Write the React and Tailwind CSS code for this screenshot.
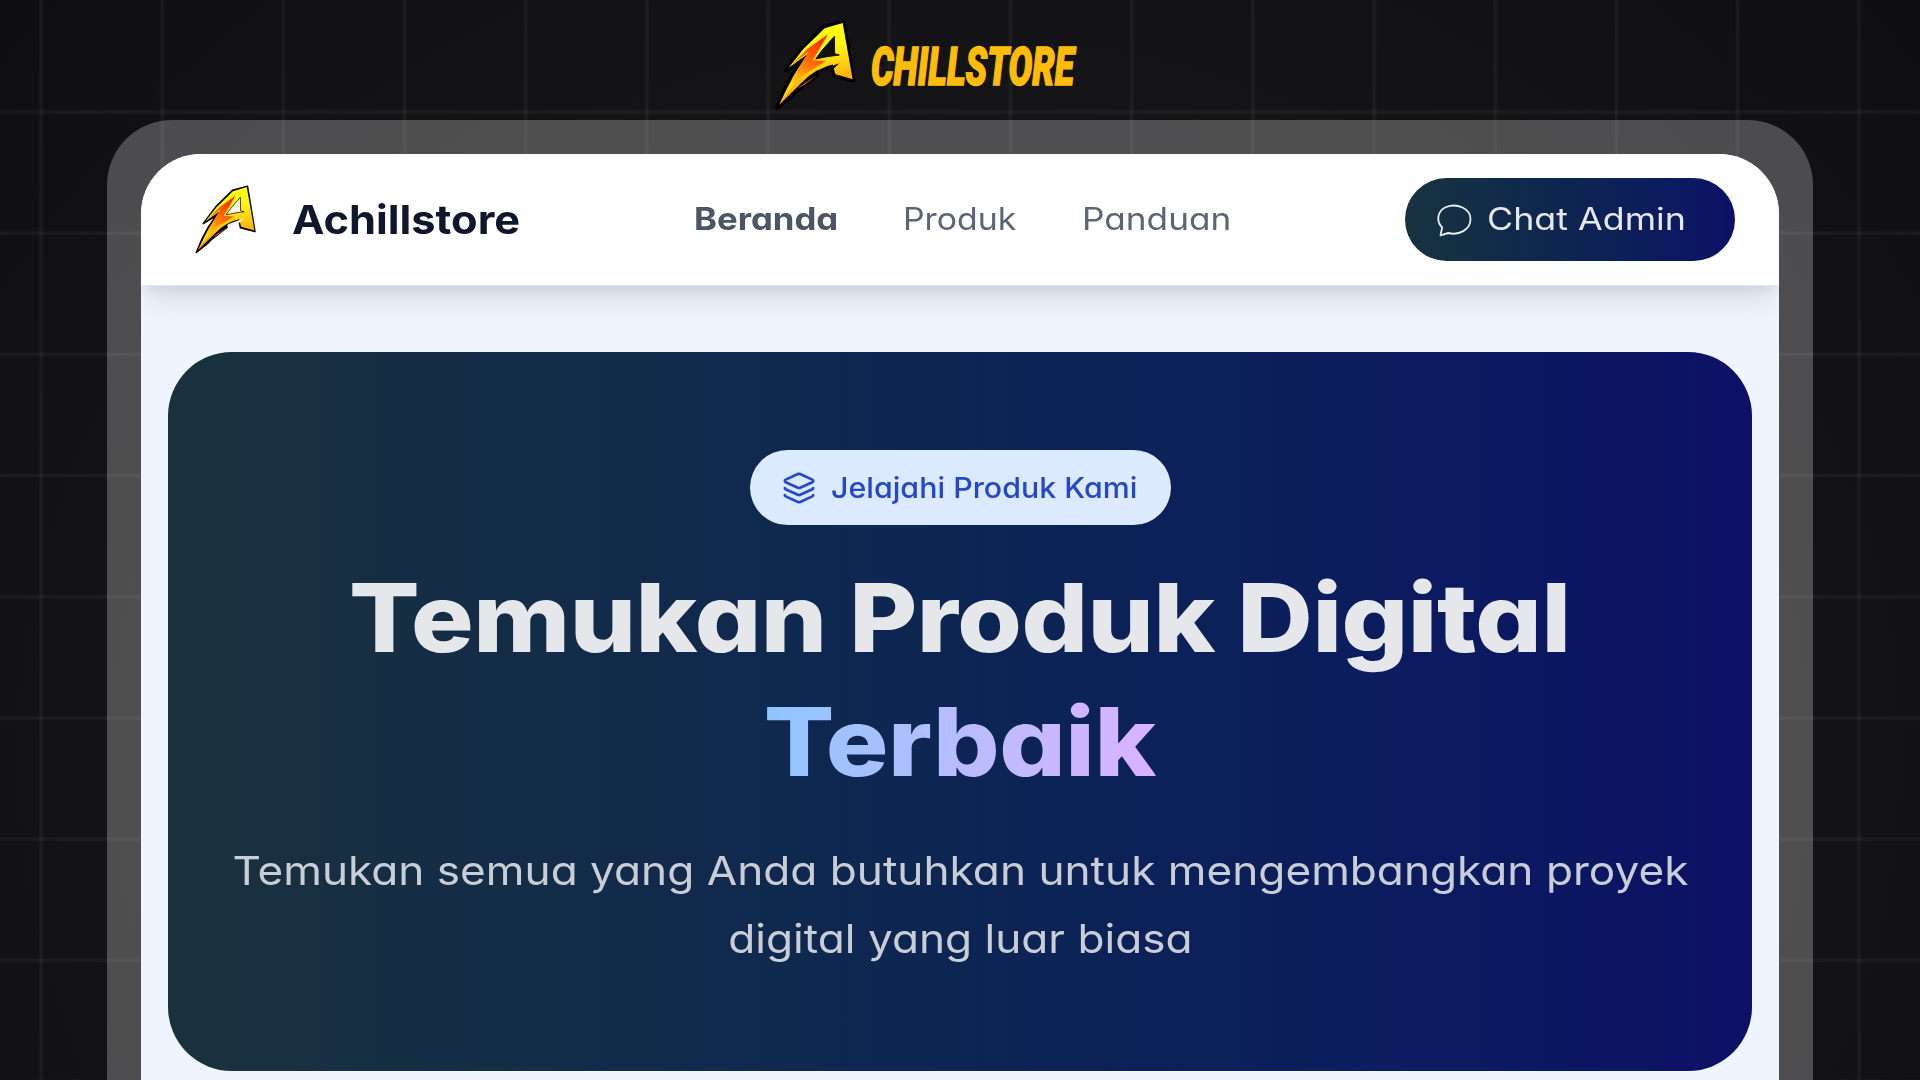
import { Layers } from 'lucide-react';

const menu = [
  { label: 'Beranda', style: 'w-[209px]', text: 'font-bold text-gray-600 scale-x-[1.12]' },
  { label: 'Produk', style: 'w-[179px]', text: 'text-[#5b6675] scale-x-[1.09]' },
  { label: 'Panduan', style: 'w-[150px]', text: 'text-[#5b6675] scale-x-[1.135]' },
];

function Logo({ id, className, outline, hole }) {
  return (
    <svg viewBox="18 24 246 276" className={className} preserveAspectRatio="none">
      <defs>
        <linearGradient id={`${id}-body`} x1="0.6" y1="0" x2="0.8" y2="1">
          <stop offset="0.3" stopColor="#fff714" />
          <stop offset="0.75" stopColor="#ffa60a" />
        </linearGradient>
        <linearGradient id={`${id}-bolt`} x1="180" y1="70" x2="50" y2="260" gradientUnits="userSpaceOnUse">
          <stop offset="0.1" stopColor="#ff2a00" />
          <stop offset="0.5" stopColor="#ff7a08" />
          <stop offset="0.85" stopColor="#ffe80c" />
        </linearGradient>
      </defs>
      <path
        d="M227 33 L168 48 L102 114 L54 178 L104 148 L74 192 L50 236 L27 290 L70 256 L88 238 L148 192 L142 184 L194 164 L199 194 L256 209 Z"
        fill="#000"
        stroke="#000"
        strokeWidth={outline}
        strokeLinejoin="round"
      />
      <path
        d="M224 36 L170 52 L106 114 L62 170 L118 130 L78 192 L54 238 L33 282 L72 244 L100 216 Q140 172 207 157 L194 160 L202 190 L254 205 Z"
        fill={`url(#${id}-body)`}
      />
      <path d="M70 162 L122 122 L80 192 L40 270 Q72 222 112 188 L174 150 L134 148 L180 70 L118 114 Z" fill={`url(#${id}-bolt)`} />
      <path d="M199 76 L162 118 L143 144 Q176 136 214 132 L200 128 Z" fill={hole} stroke="#111" strokeWidth="3" />
      <path d="M150 180 L214 157 L196 174 L150 190 Z" fill={hole} />
      <path d="M84 234 L148 192 L112 220 Z" fill="#f4600b" />
    </svg>
  );
}

function ChatIcon() {
  return (
    <svg viewBox="170 280 110 102" className="h-[34px] w-[37px]" fill="none" stroke="#e8edf3" strokeWidth="5.5" strokeLinejoin="round">
      <path d="M183 377 L188 353 C170 336 172 304 200 292 C233 279 273 297 273 328 C273 361 238 378 206 370 Z" />
    </svg>
  );
}

export default function App() {
  return (
    <div className="h-[1080px] w-full overflow-hidden bg-[radial-gradient(ellipse_75%_120%_at_50%_70%,#1c1c1e,#0d0d0f)] font-['Inter',sans-serif] [font-feature-settings:'cv11']">
      <div className="flex h-full flex-col items-center bg-[linear-gradient(to_right,transparent,rgba(255,255,255,0.045)_1.5px,rgba(255,255,255,0.045)_3.5px,transparent_5px),linear-gradient(to_bottom,transparent,rgba(255,255,255,0.045)_1.5px,rgba(255,255,255,0.045)_3.5px,transparent_5px)] bg-[length:121.2px_121.2px] bg-[position:38.5px_109.5px]">

        {/* Brand */}
        <div className="flex h-[120px] w-full shrink-0 pt-[19px] pl-[774px]">
          <Logo id="brand" className="h-[92px] w-[82px] overflow-visible" outline="12" hole="#111" />
          <svg className="ml-[15px] h-[92px] w-[212px] overflow-visible">
            <text
              x="0"
              y="65.5"
              textLength="203"
              lengthAdjust="spacingAndGlyphs"
              className="fill-[#ffbc08] stroke-[#ffbc08] stroke-[1.5px] font-['Roboto',sans-serif] text-[53px] font-black italic"
            >
              CHILLSTORE
            </text>
          </svg>
        </div>

        {/* Frame */}
        <div className="w-[1706px] flex-1 rounded-t-[65px] bg-white/25 px-[34px] pt-[34px]">
          <div className="h-full overflow-hidden rounded-t-[60px] bg-[#eef5ff]">

            {/* Navbar */}
            <header className="flex h-[132px] items-center border-b border-[#e2e8ee] bg-white pl-[53px] shadow-[0_17px_28px_-5px_rgba(0,0,0,0.11),0_7px_14px_-5px_rgba(0,0,0,0.08)]">
              <Logo id="nav" className="h-[71px] w-[63px] overflow-visible" outline="6" hole="#f4f4ec" />
              <div className="ml-[35px] w-[402px] text-[40px] font-bold text-slate-900">
                <span className="inline-block origin-left scale-x-[1.085]">Achillstore</span>
              </div>
              <nav className="flex text-[31px]">
                {menu.map((m) => (
                  <a key={m.label} className={m.style}>
                    <span className={`inline-block origin-left ${m.text}`}>{m.label}</span>
                  </a>
                ))}
              </nav>
              <button className="ml-[173px] flex h-[83px] w-[330px] items-center rounded-full bg-linear-to-r from-[#18333e] via-[#0e2451] to-[#0d1068] pl-[31px] text-[31px] text-gray-200">
                <ChatIcon />
                <span className="ml-[14px] inline-block origin-left scale-x-[1.155]">Chat Admin</span>
              </button>
            </header>

            {/* Hero */}
            <section className="mx-[27px] mt-[66px] flex h-[719px] flex-col items-center rounded-[64px] bg-linear-to-r from-[#1a313d] via-[#0d2553] to-[#0d1066] pt-[98px] text-center">
              <div className="flex h-[75px] w-[421px] items-center rounded-full bg-blue-100 pl-8 text-[29px] font-medium text-[#2647c6]">
                <Layers size={34} strokeWidth={1.9} />
                <span className="ml-[15px] inline-block origin-left whitespace-nowrap scale-x-[1.047]">Jelajahi Produk Kami</span>
              </div>
              <h1 className="mt-[31px] scale-x-[1.105] text-[94.5px] leading-[124px] font-extrabold tracking-[-0.4px] text-gray-200">
                Temukan Produk Digital
                <br />
                <span className="bg-linear-to-r from-blue-300 to-purple-300 bg-clip-text text-transparent">Terbaik</span>
              </h1>
              <p className="mt-[33px] scale-x-[1.104] text-[40px] leading-[68px] whitespace-nowrap text-[#c9ced6]">
                Temukan semua yang Anda butuhkan untuk mengembangkan proyek
                <br />
                digital yang luar biasa
              </p>
            </section>
          </div>
        </div>
      </div>
    </div>
  );
}
